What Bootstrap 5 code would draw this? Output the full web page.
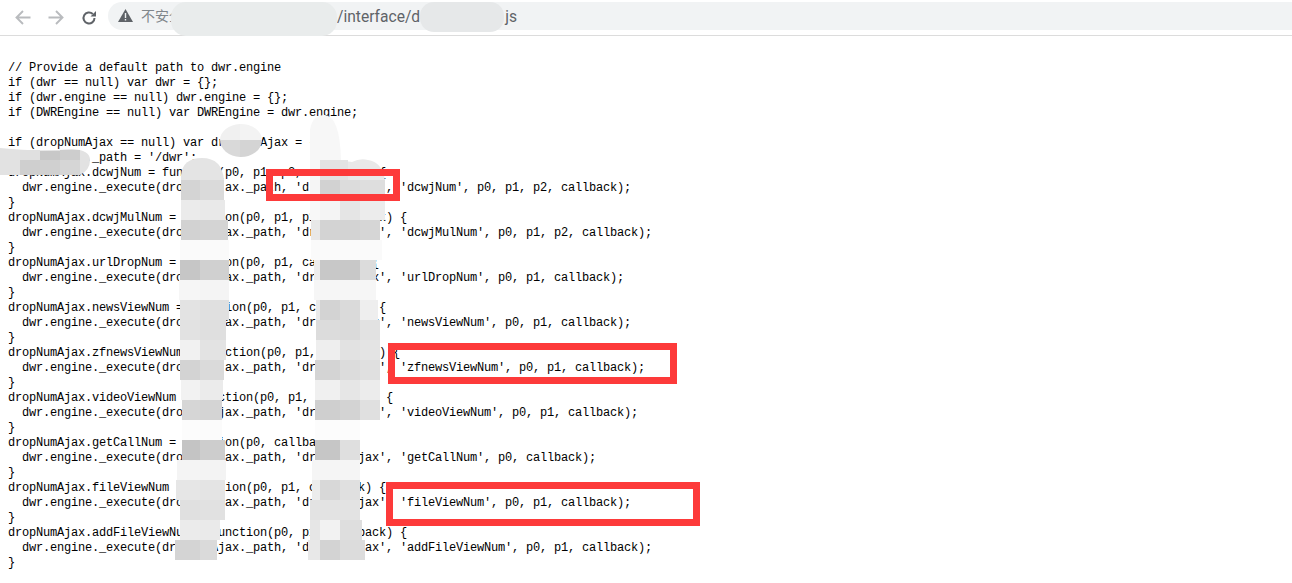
<!DOCTYPE html>
<html lang="zh">
<head>
<meta charset="utf-8">
<title>dropNumAjax.js</title>
<link href="https://cdn.jsdelivr.net/npm/bootstrap@5.3.0/dist/css/bootstrap.min.css" rel="stylesheet">
<style>
html,body{height:583px;overflow:hidden;background:#fff}
.page-shell{position:relative;width:1292px;height:583px;overflow:hidden}
.browser-bar{height:36px;border-bottom:1px solid #dcdcdc;padding-left:15px}
.nav-btns{gap:17px;width:93px}
.addr-pill{height:28px;margin-top:-4px;background:#f1f3f4;border-radius:14px 0 0 14px;padding-left:10px;font:15.6px/28px Roboto,"Noto Sans CJK SC",sans-serif;color:#5f6368;white-space:nowrap}
.addr-warn{margin-right:8px}
.addr-label{font-size:14px;color:#80868b}
.addr-path{margin-left:154px;padding-top:2px}
.addr-file{margin-left:85px;padding-top:2px}
.code-view{margin:0;padding:25px 0 0 8px;font:12px/15px "Liberation Mono",monospace;letter-spacing:-.2px;color:#000;overflow:hidden}
.overlay-art{position:absolute;left:0;top:0}
</style>
</head>
<body>
<div class="page-shell">
<header class="browser-bar d-flex align-items-center">
<div class="nav-btns d-flex align-items-center">
<svg width="16" height="15" viewBox="0 0 16 15" fill="none" stroke="#b9bbbe" stroke-width="1.9"><path d="M15.500 7.500H2M8 1 1.500 7.500 8 14"/></svg>
<svg width="16" height="15" viewBox="0 0 16 15" fill="none" stroke="#b9bbbe" stroke-width="1.9"><path d="M.5 7.500H14M8 1l6.500 6.500L8 14"/></svg>
<svg width="16" height="16" viewBox="0 0 16 16"><path d="M13.500 8a5.500 5.500 0 1 1-1.700-4" fill="none" stroke="#5f6368" stroke-width="2"/><path d="M15 1v5.500H9.500z" fill="#5f6368"/></svg>
</div>
<div class="addr-pill flex-grow-1 d-flex align-items-center">
<svg class="addr-warn" width="15" height="13" viewBox="0 0 15 13"><path d="M7.500 0 15 13H0z" fill="#5f6368"/><path d="M6.800 4h1.400v5H6.800zM6.800 10h1.400v1.500H6.800z" fill="#f1f3f4"/></svg>
<span class="addr-label">不安全</span>
<span class="addr-path">/interface/d</span>
<span class="addr-file">js</span>
</div>
</header>
<pre class="code-view">// Provide a default path to dwr.engine
if (dwr == null) var dwr = {};
if (dwr.engine == null) dwr.engine = {};
if (DWREngine == null) var DWREngine = dwr.engine;

if (dropNumAjax == null) var dropNumAjax = {};
dropNumAjax._path = '/dwr';
dropNumAjax.dcwjNum = function(p0, p1, p2, callback) {
  dwr.engine._execute(dropNumAjax._path, 'dropNumAjax', 'dcwjNum', p0, p1, p2, callback);
}
dropNumAjax.dcwjMulNum = function(p0, p1, p2, callback) {
  dwr.engine._execute(dropNumAjax._path, 'dropNumAjax', 'dcwjMulNum', p0, p1, p2, callback);
}
dropNumAjax.urlDropNum = function(p0, p1, callback) {
  dwr.engine._execute(dropNumAjax._path, 'dropNumAjax', 'urlDropNum', p0, p1, callback);
}
dropNumAjax.newsViewNum = function(p0, p1, callback) {
  dwr.engine._execute(dropNumAjax._path, 'dropNumAjax', 'newsViewNum', p0, p1, callback);
}
dropNumAjax.zfnewsViewNum = function(p0, p1, callback) {
  dwr.engine._execute(dropNumAjax._path, 'dropNumAjax', 'zfnewsViewNum', p0, p1, callback);
}
dropNumAjax.videoViewNum = function(p0, p1, callback) {
  dwr.engine._execute(dropNumAjax._path, 'dropNumAjax', 'videoViewNum', p0, p1, callback);
}
dropNumAjax.getCallNum = function(p0, callback) {
  dwr.engine._execute(dropNumAjax._path, 'dropNumAjax', 'getCallNum', p0, callback);
}
dropNumAjax.fileViewNum = function(p0, p1, callback) {
  dwr.engine._execute(dropNumAjax._path, 'dropNumAjax', 'fileViewNum', p0, p1, callback);
}
dropNumAjax.addFileViewNum = function(p0, p1, callback) {
  dwr.engine._execute(dropNumAjax._path, 'dropNumAjax', 'addFileViewNum', p0, p1, callback);
}
</pre>
<svg class="overlay-art" width="1292" height="583" viewBox="0 0 1292 583" shape-rendering="crispEdges">
<!-- address bar blur -->
<g shape-rendering="auto"><rect x="171" y="2" width="166" height="34" rx="15" fill="#e9ecec"/><rect x="420" y="2" width="84" height="30" rx="14" fill="#e6e8e9"/></g>
<!-- top left blur -->
<g shape-rendering="auto"><path d="M0 148Q40 152 72 149Q90 150 90 160Q90 170 80 175H0z" fill="#e2e2e2"/></g>
<path d="M20 150h20v10H20z" fill="#e0e0e0"/><path d="M40 151h20v9H40z" fill="#c8c8c8"/><path d="M60 150h20v10H60z" fill="#cdcdcd"/><path d="M20 160h20v15H20z" fill="#cfcfcf"/><path d="M40 160h20v15H40z" fill="#d0d0d0"/><path d="M60 160h20v15H60z" fill="#d6d6d6"/>
<!-- small blur -->
<g shape-rendering="auto"><path d="M220 140A21 16 0 0 1 240 124V140z" fill="#f0f0f0"/><path d="M240 124A21 16 0 0 1 262 140H240z" fill="#f3f3f3"/><path d="M220 140H240V157A21 17 0 0 1 220 140z" fill="#d9d9d9"/><path d="M240 140H262A21 17 0 0 1 240 157z" fill="#d4d4d4"/></g>
<!-- column one -->
<g shape-rendering="auto"><path d="M181 180V175Q183 158 202 158Q222 158 224 180z" fill="#e4e4e4"/></g>
<rect x="181" y="180" width="19" height="20" fill="#d4d4d4"/><rect x="200" y="180" width="24" height="20" fill="#dadada"/>
<rect x="181" y="200" width="19" height="20" fill="#ebebeb"/><rect x="200" y="200" width="25" height="20" fill="#e9e9e9"/>
<rect x="181" y="220" width="19" height="20" fill="#d2d2d2"/><rect x="200" y="220" width="28" height="20" fill="#d4d4d4"/>
<rect x="180" y="240" width="49" height="20" fill="#fafafa"/>
<rect x="180" y="260" width="20" height="20" fill="#c6c6c6"/><rect x="200" y="260" width="29" height="20" fill="#d0d0d0"/>
<rect x="179" y="280" width="21" height="20" fill="#f6f6f6"/><rect x="200" y="280" width="29" height="20" fill="#f4f4f4"/>
<rect x="180" y="300" width="20" height="20" fill="#e3e3e3"/><rect x="200" y="300" width="29" height="20" fill="#e0e0e0"/>
<rect x="180" y="320" width="20" height="20" fill="#e2e2e2"/><rect x="200" y="320" width="26" height="20" fill="#dfdfdf"/>
<rect x="180" y="340" width="20" height="20" fill="#f1f1f1"/><rect x="200" y="340" width="26" height="20" fill="#e3e3e3"/>
<rect x="180" y="360" width="20" height="20" fill="#d3d3d3"/><rect x="200" y="360" width="24" height="20" fill="#dadada"/>
<rect x="181" y="380" width="19" height="20" fill="#f2f2f2"/><rect x="200" y="380" width="23" height="20" fill="#ebebeb"/>
<rect x="182" y="400" width="18" height="20" fill="#d6d6d6"/><rect x="200" y="400" width="22" height="20" fill="#d4d4d4"/>
<rect x="182" y="420" width="18" height="20" fill="#fcfcfc"/><rect x="200" y="420" width="22" height="20" fill="#fbfbfb"/>
<rect x="182" y="440" width="18" height="20" fill="#c4c4c4"/><rect x="200" y="440" width="25" height="20" fill="#cdcdcd"/>
<rect x="177" y="460" width="23" height="20" fill="#f4f4f4"/><rect x="200" y="460" width="26" height="20" fill="#f3f3f3"/>
<rect x="176" y="480" width="24" height="20" fill="#e6e6e6"/><rect x="200" y="480" width="25" height="20" fill="#e4e4e4"/>
<rect x="180" y="500" width="20" height="20" fill="#e0e0e0"/><rect x="200" y="500" width="25" height="20" fill="#e1e1e1"/>
<rect x="180" y="520" width="20" height="20" fill="#ebebeb"/><rect x="200" y="520" width="20" height="20" fill="#eaeaea"/>
<rect x="175" y="540" width="25" height="20" fill="#d4d4d4"/><rect x="200" y="540" width="17" height="20" fill="#dadada"/>
<!-- column two -->
<g shape-rendering="auto"><path d="M310 160V130Q312 115 325 115Q340 117 341 160z" fill="#f7f7f7"/><path d="M340 180V166Q345 160 352 162Q360 158 368 160Q382 162 385 180z" fill="#e9e9e9"/></g>
<rect x="310" y="160" width="38" height="20" fill="#f7f7f7"/><rect x="320" y="160" width="28" height="20" fill="#e3e3e3"/>
<rect x="310" y="180" width="10" height="20" fill="#f5f5f5"/><rect x="320" y="180" width="20" height="20" fill="#d2d2d2"/><rect x="340" y="180" width="20" height="20" fill="#dcdcdc"/><rect x="360" y="180" width="25" height="20" fill="#dedede"/>
<rect x="310" y="200" width="10" height="20" fill="#f8f8f8"/><rect x="320" y="200" width="20" height="20" fill="#f4f4f4"/><rect x="340" y="200" width="20" height="20" fill="#e5e5e5"/><rect x="360" y="200" width="25" height="20" fill="#ececec"/>
<rect x="311" y="220" width="9" height="20" fill="#e8e8e8"/><rect x="320" y="220" width="40" height="20" fill="#d3d3d3"/><rect x="360" y="220" width="20" height="20" fill="#d6d6d6"/>
<rect x="311" y="240" width="71" height="20" fill="#fafafa"/>
<rect x="314" y="260" width="6" height="20" fill="#ededed"/><rect x="320" y="260" width="40" height="20" fill="#c8c8c8"/><rect x="360" y="260" width="16" height="20" fill="#dcdcdc"/>
<rect x="314" y="280" width="62" height="20" fill="#f6f6f6"/>
<rect x="316" y="300" width="4" height="20" fill="#eaeaea"/><rect x="320" y="300" width="20" height="20" fill="#d3d3d3"/><rect x="340" y="300" width="20" height="20" fill="#dadada"/><rect x="360" y="300" width="18" height="20" fill="#eeeeee"/>
<rect x="316" y="320" width="24" height="20" fill="#dcdcdc"/><rect x="340" y="320" width="20" height="20" fill="#dadada"/><rect x="360" y="320" width="20" height="20" fill="#e2e2e2"/>
<rect x="316" y="340" width="24" height="20" fill="#eeeeee"/><rect x="340" y="340" width="20" height="20" fill="#e2e2e2"/><rect x="360" y="340" width="20" height="20" fill="#e4e4e4"/>
<rect x="315" y="360" width="25" height="20" fill="#d4d4d4"/><rect x="340" y="360" width="20" height="20" fill="#dcdcdc"/><rect x="360" y="360" width="20" height="20" fill="#e0e0e0"/>
<rect x="315" y="380" width="25" height="20" fill="#f0f0f0"/><rect x="340" y="380" width="20" height="20" fill="#e6e6e6"/><rect x="360" y="380" width="20" height="20" fill="#ececec"/>
<rect x="315" y="400" width="25" height="20" fill="#cfcfcf"/><rect x="340" y="400" width="20" height="20" fill="#d3d3d3"/><rect x="360" y="400" width="20" height="20" fill="#e0e0e0"/>
<rect x="315" y="420" width="45" height="20" fill="#fcfcfc"/>
<rect x="315" y="440" width="25" height="20" fill="#c6c6c6"/><rect x="340" y="440" width="20" height="20" fill="#dfdfdf"/>
<rect x="312" y="460" width="48" height="20" fill="#f5f5f5"/>
<rect x="312" y="480" width="8" height="20" fill="#ececec"/><rect x="320" y="480" width="20" height="20" fill="#d8d8d8"/><rect x="340" y="480" width="20" height="20" fill="#e0e0e0"/>
<rect x="310" y="500" width="50" height="20" fill="#e3e3e3"/>
<rect x="310" y="520" width="10" height="20" fill="#e6e6e6"/><rect x="320" y="520" width="20" height="20" fill="#f2f2f2"/><rect x="340" y="520" width="22" height="20" fill="#dedede"/>
<rect x="308" y="540" width="12" height="20" fill="#e8e8e8"/><rect x="320" y="540" width="20" height="20" fill="#d3d3d3"/><rect x="340" y="540" width="25" height="20" fill="#dcdcdc"/>
<!-- annotation boxes -->
<g fill="none" stroke="#fd3a3a" stroke-width="7">
<rect x="269.500" y="172.500" width="127" height="25"/>
<rect x="391.500" y="346.500" width="282" height="34"/>
<rect x="389.500" y="485.500" width="307" height="37"/>
</g>
</svg>
</div>
<script src="https://cdn.jsdelivr.net/npm/bootstrap@5.3.0/dist/js/bootstrap.bundle.min.js"></script>
</body>
</html>
